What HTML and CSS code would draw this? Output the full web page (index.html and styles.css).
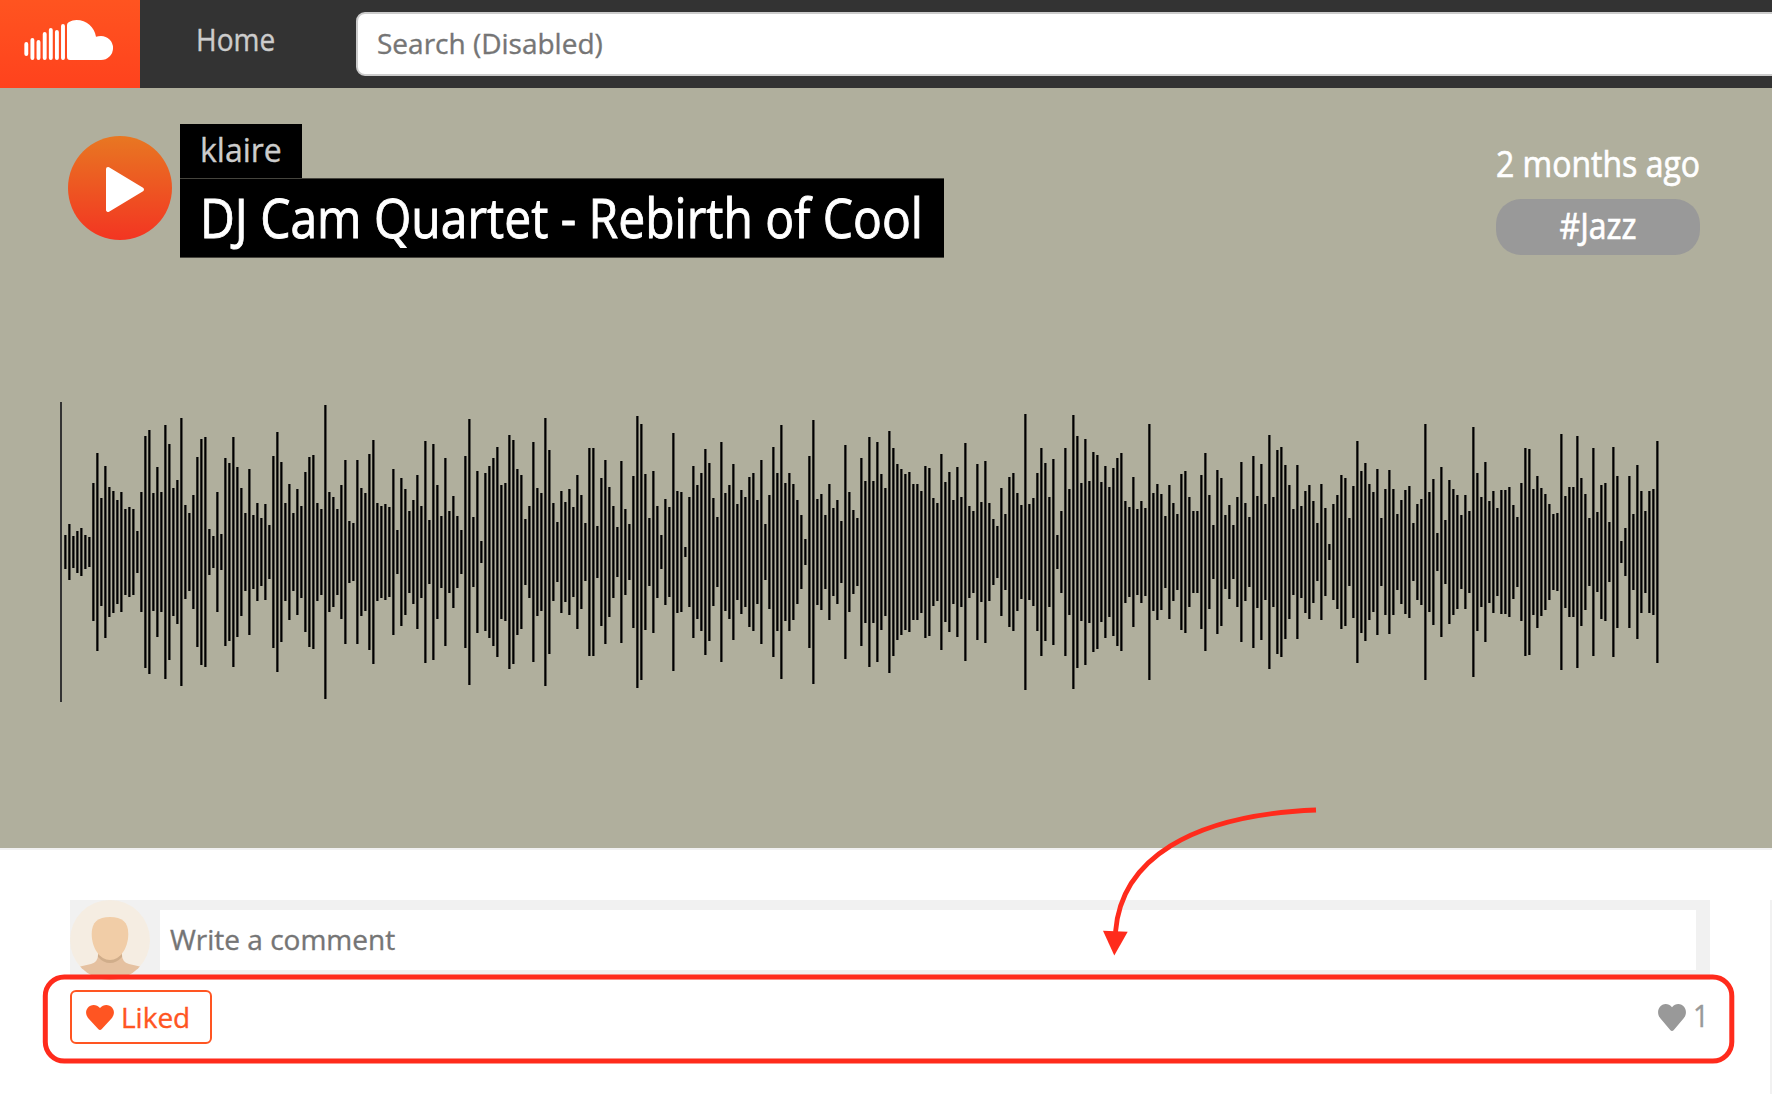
FILE: index.html
```html
<!DOCTYPE html>
<html lang="en">
<head>
<meta charset="utf-8">
<title>DJ Cam Quartet - Rebirth of Cool</title>
<link rel="stylesheet" href="styles.css">
</head>
<body>
<header class="topbar">
  <a class="logo" aria-label="Home page">
    <svg width="140" height="88" viewBox="0 0 140 88">
      <g stroke="#fff" stroke-width="3.9" stroke-linecap="round">
        <path d="M26.300 44V54M32.400 40V58M38.500 42V58M44.700 34V58M50.800 30V58M56.900 32V58M63 26V58"/>
      </g>
      <path fill="#fff" d="M67 25Q67 23 69 22Q72.500 20 76.500 20C86.500 20 94.500 27 96 36.800Q98.300 35.900 101 35.900A12 12 0 0 1 101 60H70Q67 60 67 57Z"/>
    </svg>
  </a>
  <a class="nav-link"><span class="tall">Home</span></a>
  <div class="search">Search (Disabled)</div>
</header>

<section class="hero">
  <div class="track-head">
    <button class="play" aria-label="Play">
      <svg width="40" height="48" viewBox="0 0 40 48"><path d="M3 4L37 24.500L3 45Z" fill="#fff" stroke="#fff" stroke-width="4" stroke-linejoin="round"/></svg>
    </button>
    <div class="names">
      <div class="artist">klaire</div>
      <h1 class="title"><span class="tall">DJ Cam Quartet - Rebirth of Cool</span></h1>
    </div>
    <div class="meta">
      <div class="age"><span class="tall">2 months ago</span></div>
      <div class="tag"><span class="tall">#Jazz</span></div>
    </div>
  </div>
  <div class="wave" id="wave"><span class="cursor"></span></div>
</section>

<main class="body">
  <div class="content">
    <div class="comment">
      <svg class="avatar" width="80" height="80" viewBox="0 0 80 80">
        <defs><clipPath id="round"><circle cx="40" cy="40" r="40"/></clipPath></defs>
        <g clip-path="url(#round)">
          <rect width="80" height="80" fill="#f5ede2"/>
          <path fill="#e5c1a0" d="M28 50H52V55Q52 62 59 64L72 67V80H8V67L21 64Q28 62 28 55Z"/>
          <path fill="#d0ad8a" d="M28 54Q40 64 52 54V57Q46.500 63 40 63T28 57Z"/>
          <path fill="#f1cda7" d="M21.700 34C21.700 22 28 17 40 17S58.300 22 58.300 34C58.300 48 50 60 40 60S21.700 48 21.700 34Z"/>
        </g>
      </svg>
      <div class="comment-input">Write a comment</div>
    </div>
    <div class="actions">
      <button class="liked">
        <svg class="heart" viewBox="0 0 28 25"><path fill="currentColor" d="M14 25Q13 25 12.200 24L2.500 13.500C-.5 10 -.7 6 1.800 2.800C4.800 -.8 10.500 -1 14 3C17.500 -1 23.200 -.8 26.200 2.800C28.700 6 28.500 10 25.500 13.500L15.800 24Q15 25 14 25Z"/></svg>
        <span>Liked</span>
      </button>
      <div class="likes">
        <svg class="heart heart-count" viewBox="0 0 28 25" preserveAspectRatio="none"><path fill="currentColor" d="M14 25Q13 25 12.200 24L2.500 13.500C-.5 10 -.7 6 1.800 2.800C4.800 -.8 10.500 -1 14 3C17.500 -1 23.200 -.8 26.200 2.800C28.700 6 28.500 10 25.500 13.500L15.800 24Q15 25 14 25Z"/></svg>
        <span class="tall">1</span>
      </div>
    </div>
  </div>
  <aside class="side"></aside>
</main>

<svg class="annotation" width="1772" height="1094" viewBox="0 0 1772 1094">
  <g fill="none" stroke="#ff2b1c" stroke-width="5">
    <rect x="45.300" y="977" width="1686.500" height="84" rx="19"/>
    <path stroke-width="4.800" d="M1316 810C1190 815 1121 860 1115.500 932"/>
  </g>
  <path fill="#ff2b1c" d="M1103 930.700L1127.700 931.700L1114.300 955.500Z"/>
</svg>
<script src="wave.js"></script>
</body>
</html>
```
FILE: styles.css
```css
* { box-sizing: border-box; }
body {
  margin: 0;
  height: 1094px;
  overflow: hidden;
  position: relative;
  display: flex;
  flex-direction: column;
  background: #fff;
  font-family: "Open Sans", "Noto Sans", sans-serif;
  font-size: 28px;
  line-height: 1.362;
  -webkit-text-stroke: 0.35px currentColor;
}
button { font: inherit; margin: 0; padding: 0; border: 0; background: none; }
.tall {
  display: inline-block;
  transform: scaleY(1.13);
  transform-origin: 50% 78.5%;
}
.topbar { display: flex; height: 88px; flex: none; background: #333; }
.logo { flex: none; width: 140px; height: 88px; background: linear-gradient(#ff5420, #ff421d); }
.logo svg { display: block; }
.nav-link { flex: none; width: 216px; padding: 21px 0 0 56px; color: #ccc; }
.search {
  flex: none;
  width: 1440px;
  height: 64px;
  margin-top: 12px;
  padding: 10px 18px 0 19px;
  border: 2px solid #ccc;
  border-radius: 9px;
  background: #fff;
  color: #757575;
}
.hero {
  flex: none;
  height: 762px;
  padding: 36px 72px 0 60px;
  background: #b0af9d;
  border-bottom: 2px solid #f1f1f1;
}
.track-head { display: flex; height: 278px; padding-left: 8px; }
.play {
  display: flex;
  align-items: center;
  width: 104px;
  height: 104px;
  margin: 12px 8px 0 0;
  padding: 2px 0 0 37px;
  border-radius: 50%;
  background: linear-gradient(#e87722, #f33522);
}
.names { display: flex; flex-direction: column; align-items: flex-start; }
.artist {
  height: 54px;
  padding: 4px 20px 0;
  background: #000;
  color: #ccc;
  font-size: 32px;
}
.title {
  margin: 0;
  height: 80px;
  padding: 8px 21px 0 20px;
  border: solid #45443d;
  border-width: 1px 0;
  background: #000;
  color: #fff;
  font-size: 48px;
  font-weight: 400;
  white-space: nowrap;
  -webkit-text-stroke-width: 0.8px;
}
.meta { margin: 20px 0 0 auto; width: 204px; color: #fff; font-size: 32px; text-align: center; white-space: nowrap; -webkit-text-stroke-width: 0.6px; }
.age { height: 55px; display: flex; justify-content: center; }
.tag { height: 56px; padding-top: 6px; border-radius: 25px; background: #999; }
.wave { display: flex; align-items: center; gap: 1px; height: 300px; }
.cursor { width: 2px; height: 300px; margin-right: 1px; background: #333; }
.bar { width: 3px; flex: none; background: linear-gradient(90deg, #2c2c27 1px, #000 1px 2px, #585750 2px); }
.body { display: flex; flex: 1; padding: 50px 0 0 70px; }
.content { width: 1640px; }
.comment { display: flex; height: 80px; background: #f1f1f1; }
.comment-input { flex: 1; height: 60px; margin: 10px 14px 10px 10px; padding: 10px; background: #fff; color: #757575; }
.actions { display: flex; justify-content: space-between; padding-top: 10px; }
.liked {
  display: flex;
  gap: 7px;
  width: 142px;
  height: 54px;
  padding: 6px 0 0 14px;
  border: 2px solid #ff5522;
  border-radius: 6px;
  color: #ff5522;
}
.heart { width: 28px; height: 25px; margin-top: 7px; }
.heart-count { height: 27px; margin-top: 6px; }
.likes { display: flex; gap: 7px; padding: 8px 1px 0 0; color: #999; }
.side { width: 2px; margin-left: 60px; background: #f1f1f1; }
.annotation { position: absolute; left: 0; top: 0; }
```
FILE: wave.js
```js
// Peak positions in thirds of a pixel from the top; 486 is the silent centre line.
const PEAKS = [
  435,402,438,423,414,435,441,279,189,324,228,291,303,330,306,357,351,357,423,306,138,120,309,231,306,105,162,294,270,84,
  345,369,315,201,147,141,417,438,306,432,204,219,141,231,294,369,237,375,339,384,342,405,198,126,216,339,282,369,297,348,
  246,201,195,339,357,45,306,321,357,285,210,393,399,210,294,309,192,150,339,348,342,351,237,420,264,297,363,330,255,348,
  153,390,162,285,378,204,363,318,378,420,198,87,381,243,453,249,228,204,171,285,279,135,150,237,255,387,348,156,294,309,
  84,180,339,396,303,336,297,351,255,315,399,174,174,408,264,210,291,348,411,213,357,402,258,78,102,252,384,243,348,435,
  327,351,129,303,306,471,321,228,285,249,177,219,324,381,156,309,285,222,342,300,321,261,249,330,210,402,315,171,249,105,
  279,249,282,330,375,447,198,90,327,312,375,282,354,330,393,165,306,360,384,204,273,141,273,156,252,294,123,174,222,237,
  252,246,282,282,303,228,234,324,339,192,276,246,330,231,321,159,348,363,222,336,213,339,387,408,294,372,261,249,309,345,
  72,342,324,249,174,219,321,207,435,363,174,297,75,138,279,147,273,186,195,276,228,291,234,204,189,333,351,261,357,333,
  354,102,309,282,312,378,285,339,372,252,243,321,363,363,255,189,315,405,240,264,375,345,405,321,216,339,381,198,318,222,
  342,135,321,180,171,225,285,357,225,348,303,285,333,399,282,354,462,342,315,255,264,384,288,153,243,219,282,306,237,384,
  297,240,297,372,330,300,288,399,342,327,102,306,267,429,231,390,270,297,315,375,315,363,111,249,321,216,333,303,354,300,
  300,291,345,381,279,174,177,297,258,294,312,342,372,369,132,318,291,291,138,264,312,384,174,366,285,279,396,171,258,453,
  414,258,372,225,303,363,303,297,153
];
const wave = document.getElementById("wave");
for (const peak of PEAKS) {
  const bar = document.createElement("span");
  bar.className = "bar";
  bar.style.height = ((486 - peak) * 2) / 3 + "px";
  wave.appendChild(bar);
}
```
